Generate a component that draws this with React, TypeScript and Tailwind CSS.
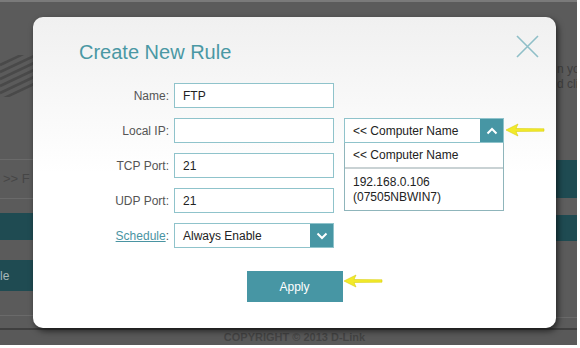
import React from "react";

const font = { fontFamily: '"Liberation Sans", Arial, sans-serif' };

const Chevron = ({ up }: { up?: boolean }) => (
  <svg width="12" height="8" viewBox="0 0 12 8" fill="none">
    <path
      d={up ? "M1.5 6.5 L6 2 L10.5 6.5" : "M1.5 1.5 L6 6 L10.5 1.5"}
      stroke="white"
      strokeWidth="2"
    />
  </svg>
);

const Arrow = () => (
  <svg width="42" height="14" viewBox="0 0 42 14">
    <path d="M2 7 L14 1 L12 5.5 L40 5.8 L40 8.2 L12 8.5 L14 13 Z" fill="#f2ea2a" stroke="#d9cf10" strokeWidth="0.6" />
  </svg>
);

const Row = ({ label, children, link }: { label: string; children: React.ReactNode; link?: boolean }) => (
  <div className="flex items-center h-[25px]">
    <div className="w-[141px] pr-[5px] text-right text-[12px] text-[#555]">
      {link ? <span className="text-[#4a94a2] underline">{label}</span> : label}:
    </div>
    {children}
  </div>
);

const Input = ({ value }: { value?: string }) => (
  <div className="w-[160px] h-[25px] border border-[#8fc3cb] bg-white flex items-center pl-[8px] text-[12px] text-[#222]">
    {value}
  </div>
);

export default function App() {
  return (
    <div className="w-[580px] h-[348px] bg-white overflow-hidden" style={font}>
      <div className="relative w-[577px] h-[345px] bg-[#5b5b5b] flex flex-col">
        <div className="h-[2px] bg-[#7a7a7a]" />
        {/* background page */}
        <div className="flex-1 flex justify-between">
          <div className="w-[40px] flex flex-col">
            <div className="h-[53px]" />
            <svg width="34" height="42" viewBox="0 0 34 42">
              {[0, 7, 14, 21, 28, 35].map((y) => (
                <path key={y} d={`M0 ${y + 10} L34 ${y - 6}`} stroke="#494949" strokeWidth="2.5" />
              ))}
            </svg>
            <div className="h-[62px]" />
            <div className="h-px bg-[#6a6a6a]" />
            <div className="h-[38px] flex items-center text-[13px] text-[#464646] pl-[3px]">&gt;&gt; F</div>
            <div className="h-px bg-[#6a6a6a]" />
            <div className="h-[14px]" />
            <div className="h-[27px] bg-[#1f4b52]" />
            <div className="h-[20px]" />
            <div className="h-[31px] bg-[#1f4b52] flex items-center text-[12px] text-[#a8b7b9]">le</div>
            <div className="h-[24px]" />
            <div className="h-px bg-[#6a6a6a]" />
          </div>
          <div className="w-[40px] flex flex-col">
            <div className="h-[60px] shrink-0" />
            <div className="h-[30px] shrink-0 pl-[20px] text-[12px] leading-[15px] text-[#3e3e3e] whitespace-nowrap overflow-hidden">
              n yo
              <br />d cli
            </div>
            <div className="h-[68px] shrink-0" />
            <div className="h-[38px] shrink-0 bg-[#1f4b52]" />
            <div className="h-[17px] shrink-0 bg-[#5e5e5e]" />
            <div className="h-[26px] shrink-0 bg-[#1f4b52]" />
            <div className="h-[76px] shrink-0" />
            <div className="h-px shrink-0 bg-[#6a6a6a]" />
          </div>
        </div>
        <div className="h-[2px] bg-[#3f3f3f]" />
        <div className="h-[15px] bg-[#595959] flex items-center justify-center pl-[12px] text-[11px] text-[#444] font-bold">
          COPYRIGHT © 2013 D-Link
        </div>

        {/* modal */}
        <div className="absolute left-[33px] top-[17px] w-[523px] h-[311px] rounded-[10px] bg-gradient-to-b from-[#f0f0f0] via-white to-white shadow-[2px_3px_6px_rgba(0,0,0,0.6)] flex flex-col">
          <div className="flex justify-between pl-[46px] pr-[17px] pt-[21px]">
            <div className="text-[20px] text-[#4a98a4] leading-[28px]">Create New Rule</div>
            <svg width="23" height="23" viewBox="0 0 23 23" className="mt-[-3px]">
              <path d="M1 1 L22 22 M22 1 L1 22" stroke="#8fbfc8" strokeWidth="1.6" />
            </svg>
          </div>
          <div className="flex mt-[17px]">
            <div className="flex flex-col gap-[10px]">
              <Row label="Name">
                <Input value="FTP" />
              </Row>
              <Row label="Local IP">
                <Input />
              </Row>
              <Row label="TCP Port">
                <Input value="21" />
              </Row>
              <Row label="UDP Port">
                <Input value="21" />
              </Row>
              <Row label="Schedule" link>
                <div className="w-[160px] h-[25px] border border-[#8fc3cb] bg-white flex items-center text-[12px] text-[#222]">
                  <span className="flex-1 pl-[8px]">Always Enable</span>
                  <div className="w-[23px] h-full bg-[#4796a4] flex items-center justify-center">
                    <Chevron />
                  </div>
                </div>
              </Row>
            </div>
            <div className="ml-[10px] mt-[35px] w-[160px] flex flex-col text-[12px] text-[#222]">
              <div className="h-[25px] border border-[#8fc3cb] bg-white flex items-center">
                <span className="flex-1 pl-[8px]">&lt;&lt; Computer Name</span>
                <div className="w-[23px] h-full bg-[#4796a4] flex items-center justify-center">
                  <Chevron up />
                </div>
              </div>
              <div className="border border-t-0 border-[#8fb5bb] bg-white">
                <div className="h-[26px] flex items-center pl-[8px] border-b-2 border-[#c9d2d4]">&lt;&lt; Computer Name</div>
                <div className="pl-[8px] pt-[6px] pb-[5px] leading-[15px]">
                  192.168.0.106
                  <br />
                  (07505NBWIN7)
                </div>
              </div>
            </div>
          </div>
          <div className="flex justify-center mt-[23px]">
            <div className="w-[96px] h-[31px] bg-[#4796a4] text-white text-[12px] flex items-center justify-center">
              Apply
            </div>
          </div>
        </div>

        {/* annotation arrows */}
        <div className="absolute left-[504px] top-[123px]">
          <Arrow />
        </div>
        <div className="absolute left-[342px] top-[274px]">
          <Arrow />
        </div>
      </div>
    </div>
  );
}
